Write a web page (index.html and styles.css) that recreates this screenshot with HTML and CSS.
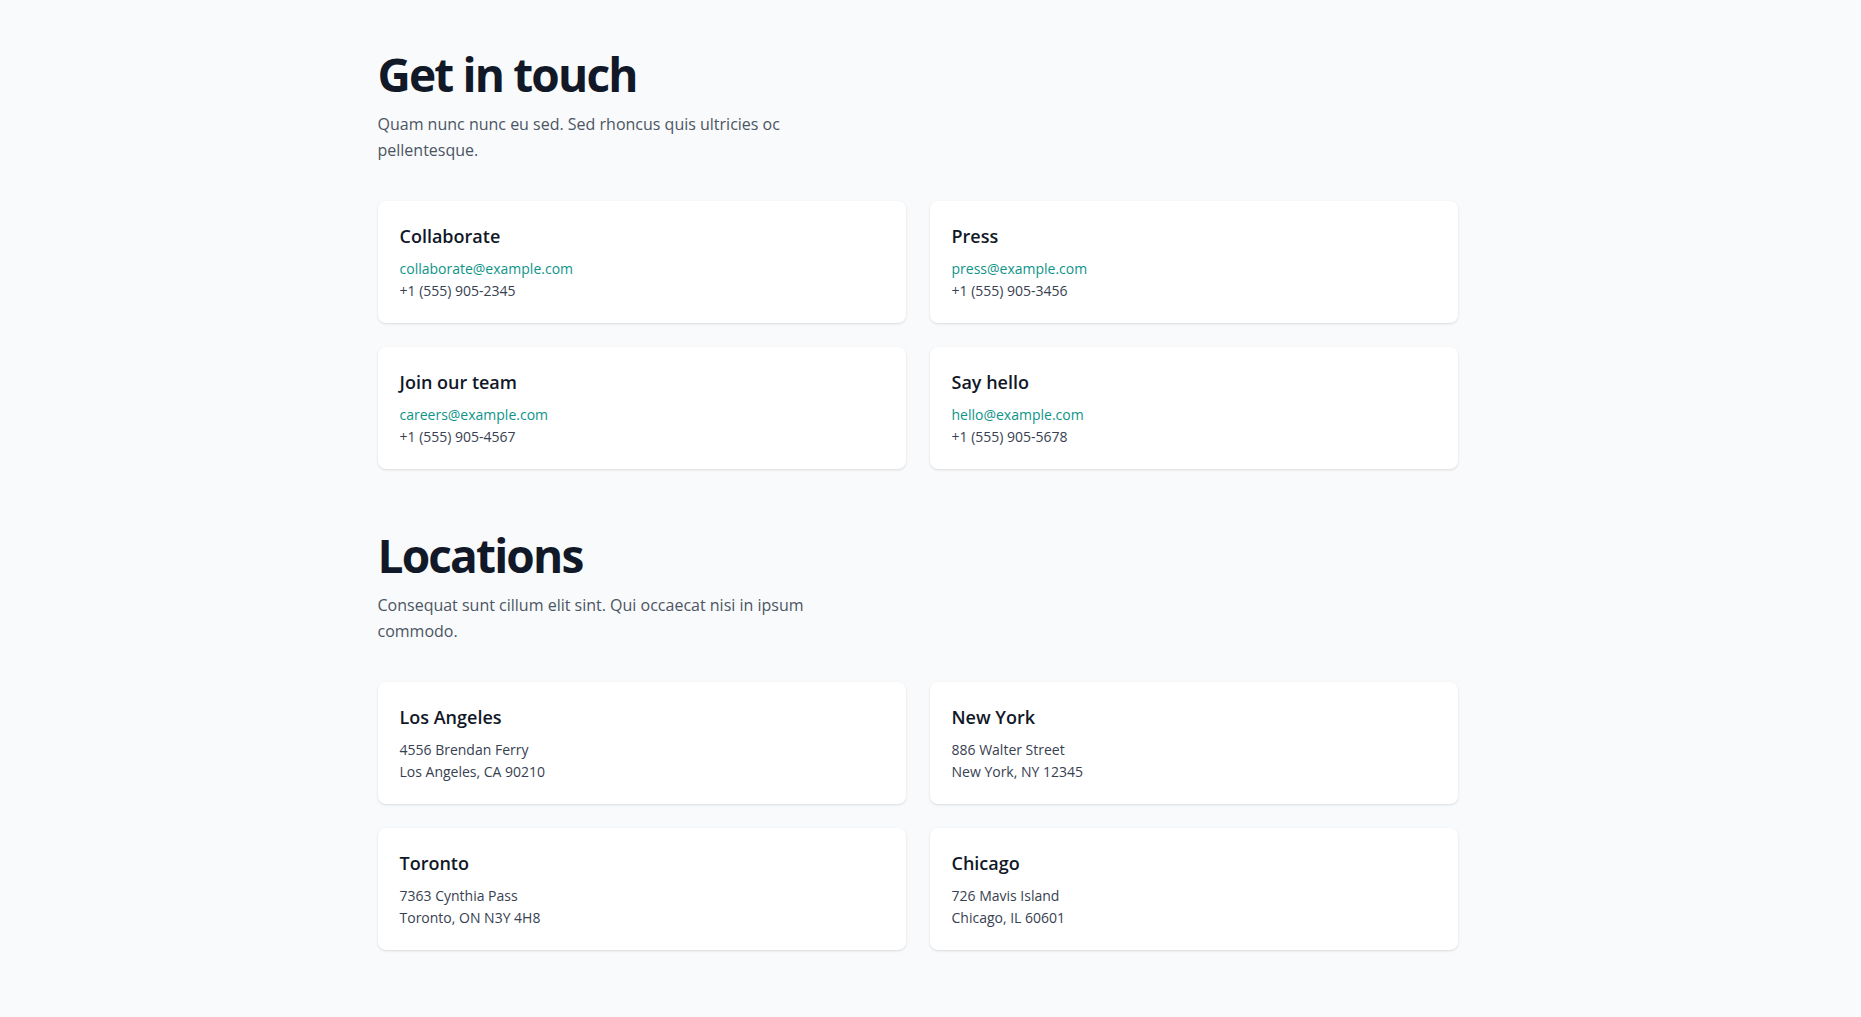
FILE: index.html
```html
<!DOCTYPE html>
<html lang="en">
<head>
<meta charset="utf-8">
<title>Contact</title>
<link rel="stylesheet" href="styles.css">
</head>
<body>
<main class="page">
  <section class="section">
    <h2 class="title">Get in touch</h2>
    <p class="lead">Quam nunc nunc eu sed. Sed rhoncus quis ultricies oc pellentesque.</p>
    <div class="grid">
      <div class="card">
        <h3 class="card-title">Collaborate</h3>
        <dl class="card-body">
          <dd><a class="mail" href="#">collaborate@example.com</a></dd>
          <dd>+1 (555) 905-2345</dd>
        </dl>
      </div>
      <div class="card">
        <h3 class="card-title">Press</h3>
        <dl class="card-body">
          <dd><a class="mail" href="#">press@example.com</a></dd>
          <dd>+1 (555) 905-3456</dd>
        </dl>
      </div>
      <div class="card">
        <h3 class="card-title">Join our team</h3>
        <dl class="card-body">
          <dd><a class="mail" href="#">careers@example.com</a></dd>
          <dd>+1 (555) 905-4567</dd>
        </dl>
      </div>
      <div class="card">
        <h3 class="card-title">Say hello</h3>
        <dl class="card-body">
          <dd><a class="mail" href="#">hello@example.com</a></dd>
          <dd>+1 (555) 905-5678</dd>
        </dl>
      </div>
    </div>
  </section>

  <section class="section section-next">
    <h2 class="title">Locations</h2>
    <p class="lead">Consequat sunt cillum elit sint. Qui occaecat nisi in ipsum commodo.</p>
    <div class="grid">
      <div class="card">
        <h3 class="card-title">Los Angeles</h3>
        <address class="card-body">
          <p>4556 Brendan Ferry</p>
          <p>Los Angeles, CA 90210</p>
        </address>
      </div>
      <div class="card">
        <h3 class="card-title">New York</h3>
        <address class="card-body">
          <p>886 Walter Street</p>
          <p>New York, NY 12345</p>
        </address>
      </div>
      <div class="card">
        <h3 class="card-title">Toronto</h3>
        <address class="card-body">
          <p>7363 Cynthia Pass</p>
          <p>Toronto, ON N3Y 4H8</p>
        </address>
      </div>
      <div class="card">
        <h3 class="card-title">Chicago</h3>
        <address class="card-body">
          <p>726 Mavis Island</p>
          <p>Chicago, IL 60601</p>
        </address>
      </div>
    </div>
  </section>
</main>
</body>
</html>
```

FILE: styles.css
```css
* { box-sizing: border-box; }

html, body {
  margin: 0;
  padding: 0;
  background: #f9fafb;
}

body {
  font-family: "Open Sans", "Noto Sans", "Liberation Sans", sans-serif;
  color: #4b5563;
}

.page {
  max-width: 1106px;
  margin: 0 auto;
  padding: 50px 26px 60px 0;
}

.section-next {
  margin-top: 62px;
}

.title {
  margin: 0;
  font-size: 46px;
  line-height: 48px;
  font-weight: 700;
  letter-spacing: -0.04em;
  color: #111827;
}

.lead {
  margin: 13px 0 0;
  max-width: 448px;
  font-size: 16px;
  line-height: 26px;
  color: #4b5563;
}

.grid {
  margin-top: 38px;
  display: grid;
  grid-template-columns: 1fr 1fr;
  gap: 24px;
}

.card {
  background: #ffffff;
  border-radius: 8px;
  padding: 21px 22px 21px;
  box-shadow: 0 1px 3px rgba(0, 0, 0, 0.1), 0 1px 2px -1px rgba(0, 0, 0, 0.1);
}

.card-title {
  margin: 0;
  font-size: 18px;
  line-height: 28px;
  font-weight: 600;
  color: #111827;
}

.card-body {
  margin: 8px 0 0;
  font-style: normal;
  font-size: 14px;
  line-height: 22px;
  color: #374151;
}

.card-body dd,
.card-body p {
  margin: 0;
}

.mail {
  color: #0d9488;
  text-decoration: none;
}
```
